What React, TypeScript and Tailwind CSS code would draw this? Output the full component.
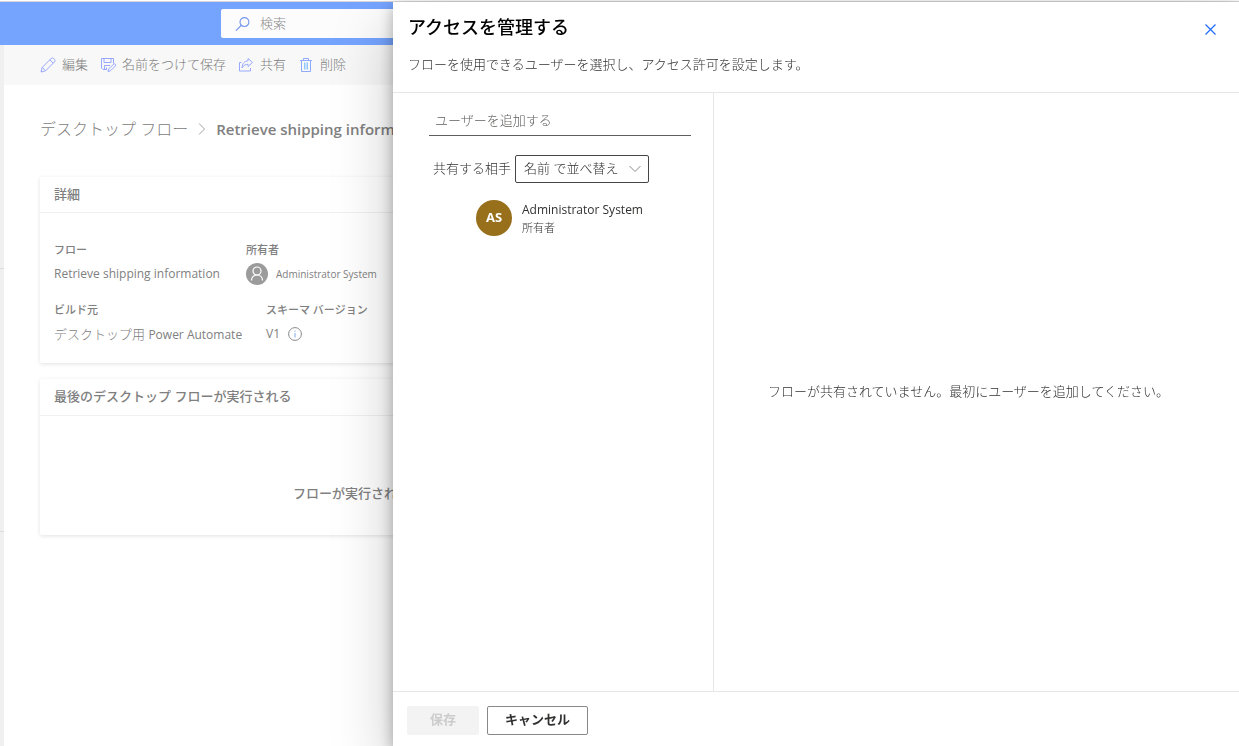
import React from "react";

const EditIcon = () => (
  <svg width="16" height="16" viewBox="0 0 16 16" fill="none" stroke="#98a8ff" strokeLinejoin="round">
    <path d="M1 15l1.200-4.600L11 1.600a1.900 1.900 0 0 1 2.800 0l.6.6a1.900 1.900 0 0 1 0 2.800L5.600 13.800 1 15zM9.800 2.800l3.400 3.400M2.200 10.400l3.400 3.400" />
  </svg>
);

const SaveAsIcon = () => (
  <svg width="16" height="16" viewBox="0 0 16 16" fill="none" stroke="#98a8ff" strokeLinejoin="round">
    <path d="M7 12.500H3L1.500 11V1.500h12v5M4 1.500v4h7v-4M4.500 12.500v-4H10M6.500 10.500v2" />
    <path d="M8 14.500l.7-2.500 4.800-4.800a1.200 1.200 0 0 1 1.800 1.800l-4.800 4.800L8 14.500z" fill="#f8f8f8" />
  </svg>
);

const ShareIcon = () => (
  <svg width="16" height="16" viewBox="0 0 16 16" fill="none" stroke="#98a8ff" strokeLinejoin="round">
    <path d="M3.500 5.500H1.500v8.500h11v-3" />
    <path d="M10 1.500l4.500 4-4.500 4V7.300C7.500 7.300 5.500 8.300 4 11c.2-4.500 2.800-7 6-7.200V1.500z" />
  </svg>
);

const DeleteIcon = () => (
  <svg width="16" height="16" viewBox="0 0 16 16" fill="none" stroke="#8fabff">
    <path d="M2 3.500h12M5.500 3.500v-2h5v2M3.500 3.500v11h9v-11" />
    <path d="M6.500 5.500v7M8 5.500v7M9.500 5.500v7" stroke="#90c8ff" />
  </svg>
);

const SearchIcon = () => (
  <svg width="16" height="16" viewBox="0 0 16 16" fill="none" stroke="#7596ea" strokeWidth="1.200">
    <circle cx="10" cy="6" r="4.700" />
    <path d="M6.700 9.300L1 15" />
  </svg>
);

const PersonIcon = () => (
  <svg className="shrink-0" width="22" height="22" viewBox="0 0 22 22" fill="none" stroke="#fff" strokeWidth="1.200">
    <circle cx="11" cy="11" r="11" fill="#9b9b9b" stroke="none" />
    <circle cx="11" cy="8" r="4" />
    <path d="M5.500 17.500C5.500 14 8 12 11 12s5.500 2 5.500 5.500" />
  </svg>
);

const InfoIcon = () => (
  <svg width="14" height="14" viewBox="0 0 14 14" fill="none" stroke="#8a8a8a">
    <circle cx="7" cy="7" r="6.400" />
    <path d="M7 6v4.500M7 3.500v1.200" stroke="#7fa6e8" />
  </svg>
);

const commands = [
  { label: "編集", icon: <EditIcon /> },
  { label: "名前をつけて保存", icon: <SaveAsIcon /> },
  { label: "共有", icon: <ShareIcon /> },
  { label: "削除", icon: <DeleteIcon /> },
];

const FlowPage = () => {
  return (
    <div className="flex min-h-screen flex-col border-t border-[#d8d8d8] text-[#808080]">
      <header className="h-[43px] bg-[#75a4ff] pt-[7px] pl-[221px]">
        <label className="flex h-[29px] w-[480px] items-center gap-2.5 rounded-xs bg-[#fcfcfc] px-3.5">
          <SearchIcon />
          <input
            type="search"
            aria-label="検索"
            placeholder="検索"
            className="w-full font-light outline-none placeholder:text-[#8a8a8a]"
          />
        </label>
      </header>
      <div className="flex grow">
        <div className="flex w-1 shrink-0 flex-col bg-[#f0f0f0]">
          <div className="h-56 border-b border-[#dcdcdc]" />
          <div className="h-[263px] border-b border-[#dcdcdc]" />
        </div>
        <main className="min-w-0 grow">
          <div className="flex h-10 items-center gap-3 bg-[#f8f8f8] pl-9">
            {commands.map((c) => (
              <button key={c.label} className="flex items-center gap-1.5 font-light">
                {c.icon}
                {c.label}
              </button>
            ))}
          </div>
          <div className="w-[710px] pl-9">
            <nav className="mt-8 flex h-6 items-center gap-2.5 whitespace-nowrap">
              <a href="#flows" className="text-base font-light">
                デスクトップ フロー
              </a>
              <svg width="8" height="12" viewBox="0 0 8 12" fill="none" stroke="#a0a0a0">
                <path d="M1 .500L6.500 6 1 11.500" />
              </svg>
              <h1 className="text-[15px] font-semibold">Retrieve shipping information</h1>
            </nav>
            <section className="mt-9 h-[186px] rounded-xs shadow-[0_1px_4px_rgba(0,0,0,0.12)]">
              <h2 className="flex h-9 items-center border-b border-[#f0f0f0] px-3.5 font-medium">詳細</h2>
              <dl className="flex px-3.5 pt-[27px] leading-5">
                <div className="w-48">
                  <dt className="text-[11px] font-medium">フロー</dt>
                  <dd className="mt-1 text-xs leading-5">Retrieve shipping information</dd>
                </div>
                <div>
                  <dt className="text-[11px] font-medium">所有者</dt>
                  <dd className="mt-1 flex h-5 items-center gap-2 text-[10px]">
                    <PersonIcon />
                    Administrator System
                  </dd>
                </div>
              </dl>
              <dl className="flex px-3.5 pt-4 leading-5">
                <div className="w-[212px]">
                  <dt className="text-[11px] font-medium">ビルド元</dt>
                  <dd className="mt-1 font-light">
                    デスクトップ用 <span className="text-xs font-normal">Power Automate</span>
                  </dd>
                </div>
                <div>
                  <dt className="text-[11px] font-medium">スキーマ バージョン</dt>
                  <dd className="mt-1 flex items-center gap-2 text-xs leading-5">
                    V1
                    <InfoIcon />
                  </dd>
                </div>
              </dl>
            </section>
            <section className="mt-4 h-[156px] rounded-xs font-medium shadow-[0_1px_4px_rgba(0,0,0,0.12)]">
              <h2 className="flex h-[37px] items-center border-b border-[#f0f0f0] px-3.5">
                最後のデスクトップ フローが実行される
              </h2>
              <p className="pt-17 text-center">フローが実行されていません</p>
            </section>
          </div>
        </main>
      </div>
    </div>
  );
};

const AccessPanel = () => {
  return (
    <aside
      aria-labelledby="panel-title"
      className="fixed top-0.5 right-0 bottom-0 flex w-full max-w-[846px] flex-col bg-white text-[#323130] shadow-[0_25px_58px_rgba(0,0,0,0.22),0_5px_14px_rgba(0,0,0,0.3)]"
    >
      <div className="flex h-[91px] items-start justify-between border-b border-[#e6e6e6] px-[15px] pt-[11px]">
        <div>
          <h2 id="panel-title" className="text-lg leading-7 font-medium text-black">
            アクセスを管理する
          </h2>
          <p className="mt-[13px] leading-5 font-light">
            フローを使用できるユーザーを選択し、アクセス許可を設定します。
          </p>
        </div>
        <button aria-label="閉じる" className="flex h-[33px] items-center px-2">
          <svg width="11" height="11" viewBox="0 0 11 11" stroke="#1f6bff" strokeWidth="1.200">
            <path d="M.500 .500l10 10M10.500 .500l-10 10" />
          </svg>
        </button>
      </div>
      <div className="flex grow">
        <div className="w-[321px] shrink-0 border-r border-[#e6e6e6] px-9 pt-[11px]">
          <input
            type="text"
            aria-label="ユーザーを追加する"
            placeholder="ユーザーを追加する"
            className="h-8 w-[262px] border-b border-[#605e5c] px-1.5 font-light outline-none placeholder:text-[#605e5c]"
          />
          <div className="mt-[19px] flex items-center gap-1 pl-1 font-light whitespace-nowrap">
            <label htmlFor="sort">共有する相手</label>
            <div className="relative">
              <select
                id="sort"
                className="h-7 w-[134px] appearance-none rounded-xs border border-[#484644] bg-white px-2"
              >
                <option>名前 で並べ替え</option>
              </select>
              <svg
                className="pointer-events-none absolute top-2.5 right-2"
                width="12"
                height="8"
                viewBox="0 0 12 8"
                fill="none"
                stroke="#8a8886"
              >
                <path d="M.500 1L6 6.500 11.500 1" />
              </svg>
            </div>
          </div>
          <div className="mt-[17px] flex items-center gap-2.5 pl-[47px]">
            <span className="flex size-9 items-center justify-center rounded-full bg-[#986f1b] font-bold text-white">
              AS
            </span>
            <div>
              <p className="text-xs leading-5">Administrator System</p>
              <p className="text-[11px] leading-4 font-light">所有者</p>
            </div>
          </div>
        </div>
        <div className="flex grow items-center justify-center pr-4 font-light">
          フローが共有されていません。最初にユーザーを追加してください。
        </div>
      </div>
      <div className="flex h-[55px] items-center gap-2 border-t border-[#e6e6e6] px-3.5 pt-0.5 font-semibold">
        <button disabled className="h-[29px] w-18 rounded-xs bg-[#f3f3f3] text-[#cccccc]">
          保存
        </button>
        <button className="h-[29px] w-[101px] rounded-xs border border-[#8a8886]">キャンセル</button>
      </div>
    </aside>
  );
};

const App = () => {
  return (
    <div className="overflow-hidden bg-white pt-px font-['Open_Sans','Noto_Sans_CJK_JP',sans-serif] text-[13px]">
      <FlowPage />
      <AccessPanel />
    </div>
  );
};

export default App;
